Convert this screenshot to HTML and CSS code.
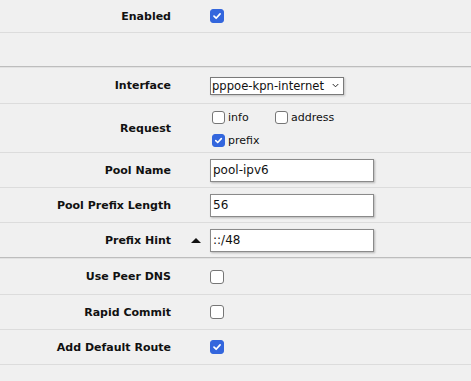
FILE: index.html
```html
<!DOCTYPE html>
<html lang="en">
<head>
    <meta charset="UTF-8">
    <title>DHCPv6 Client</title>
    <link rel="stylesheet" href="styles.css">
</head>
<body>

<div class="form">
    <div class="row first">
        <div class="lbl">Enabled</div>
        <div class="ctl"><span class="cb on"><svg viewBox="0 0 14 14"><path d="M3.5 7.2 L6 9.6 L10.6 4.6"/></svg></span></div>
    </div>
    <div class="row blank"></div>

    <div class="row sect">
        <div class="lbl">Interface</div>
        <div class="ctl">
            <div class="select">pppoe-kpn-internet<svg class="chev" viewBox="0 0 8 5"><path d="M0.8 0.8 L4 4 L7.2 0.8"/></svg></div>
        </div>
    </div>
    <div class="row tall">
        <div class="lbl">Request</div>
        <div class="ctl">
            <div class="checks">
                <label class="opt"><span class="cb small"></span>info</label>
                <label class="opt"><span class="cb small"></span>address</label>
                <label class="opt"><span class="cb small on"><svg viewBox="0 0 14 14"><path d="M3.5 7.2 L6 9.6 L10.6 4.6"/></svg></span>prefix</label>
            </div>
        </div>
    </div>
    <div class="row">
        <div class="lbl">Pool Name</div>
        <div class="ctl"><div class="input">pool-ipv6</div></div>
    </div>
    <div class="row">
        <div class="lbl">Pool Prefix Length</div>
        <div class="ctl"><div class="input">56</div></div>
    </div>
    <div class="row end">
        <div class="lbl">Prefix Hint</div>
        <div class="mark"><span class="tri"></span></div>
        <div class="ctl"><div class="input">::/48</div></div>
    </div>

    <div class="row sect">
        <div class="lbl">Use Peer DNS</div>
        <div class="ctl"><span class="cb"></span></div>
    </div>
    <div class="row">
        <div class="lbl">Rapid Commit</div>
        <div class="ctl"><span class="cb"></span></div>
    </div>
    <div class="row">
        <div class="lbl">Add Default Route</div>
        <div class="ctl"><span class="cb on"><svg viewBox="0 0 14 14"><path d="M3.5 7.2 L6 9.6 L10.6 4.6"/></svg></span></div>
    </div>
</div>

</body>
</html>
```

FILE: styles.css
```css
body {
    margin: 0;
    background-color: #f0f0f0;
    font-family: "DejaVu Sans", Verdana, sans-serif;
    color: #111;
}
.form {
    width: 100%;
}
.row {
    display: grid;
    grid-template-columns: 171px 39px 1fr;
    align-items: center;
    height: 34px;
    border-bottom: 1px solid #dcdcdc;
}
.row.first {
    height: 32px;
}
.row.blank {
    height: 33px;
    border-bottom: 1px solid #bdbdbd;
}
.row.end {
    border-bottom: 1px solid #bdbdbd;
}
.row.sect {
    border-top: 1px solid #e2e2e2;
    height: 35px;
}
.row.tall {
    height: 48px;
}
.lbl {
    grid-column: 1;
    text-align: right;
    font-size: 11px;
    font-weight: bold;
}
.mark {
    grid-column: 2;
    justify-self: end;
    margin-right: 9px;
    display: flex;
    align-items: center;
}
.tri {
    width: 0;
    height: 0;
    border-left: 5px solid transparent;
    border-right: 5px solid transparent;
    border-bottom: 5px solid #111;
}
.ctl {
    grid-column: 3;
    display: flex;
    align-items: center;
}

/* checkboxes */
.cb {
    display: inline-block;
    box-sizing: border-box;
    width: 14px;
    height: 14px;
    border: 1px solid #767676;
    border-radius: 3px;
    background-color: #fff;
}
.cb.on {
    background-color: #3366dd;
    border-color: #3366dd;
}
.cb svg {
    display: block;
    width: 12px;
    height: 12px;
}
.cb svg path {
    fill: none;
    stroke: #fff;
    stroke-width: 2;
    stroke-linecap: round;
    stroke-linejoin: round;
}
.cb.small {
    width: 13px;
    height: 13px;
    margin-left: 2px;
}
.cb.small svg {
    width: 11px;
    height: 11px;
}
.checks {
    display: grid;
    grid-template-columns: 63px 63px;
    row-gap: 8px;
    padding-top: 2px;
}
.opt {
    display: flex;
    align-items: center;
    gap: 3px;
    font-size: 11px;
    height: 15px;
}

/* select + inputs */
.select {
    box-sizing: border-box;
    width: 134px;
    height: 18px;
    border: 1px solid #7a7a7a;
    background-color: #fff;
    box-shadow: 1px 1px 2px rgba(0, 0, 0, 0.2);
    font-size: 11.6px;
    line-height: 16px;
    padding-left: 1px;
    display: flex;
    align-items: center;
    justify-content: space-between;
}
.chev {
    width: 7px;
    height: 5px;
    margin-right: 4px;
}
.chev path {
    fill: none;
    stroke: #222;
    stroke-width: 1.1;
}
.input {
    box-sizing: border-box;
    width: 164px;
    height: 23px;
    border: 1px solid #8a8a8a;
    background-color: #fff;
    box-shadow: 1px 1px 2px rgba(0, 0, 0, 0.25);
    font-size: 12px;
    line-height: 21px;
    padding-left: 2px;
}
```
